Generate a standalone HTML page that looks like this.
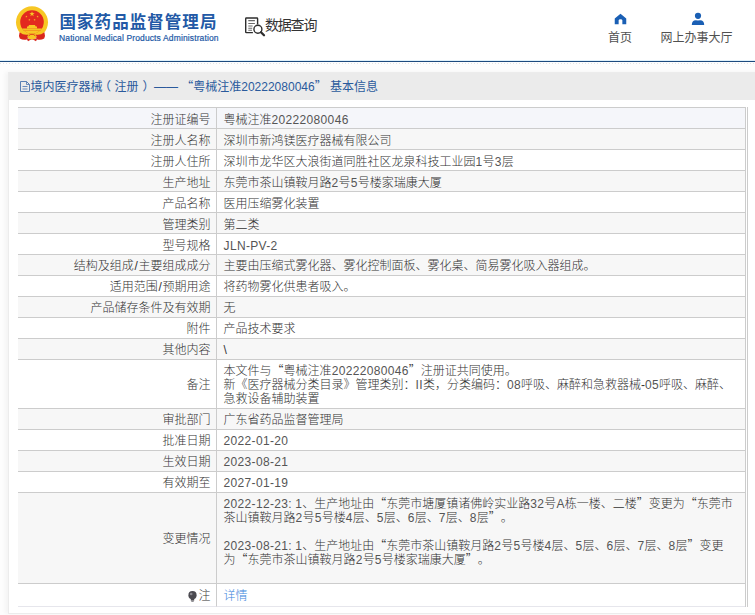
<!DOCTYPE html>
<html lang="zh-CN">
<head>
<meta charset="utf-8">
<title>国家药品监督管理局 数据查询</title>
<style>
html,body{margin:0;padding:0;}
body{width:755px;height:615px;overflow:hidden;background:#fff;font-family:"Liberation Sans","Noto Sans CJK SC",sans-serif;color:#333;position:relative;}
.hdr{position:absolute;left:0;top:0;width:755px;height:61px;background:#fff;border-bottom:1px solid #1c4a7e;box-shadow:0 -1px 0 #dff1fb inset;}
.bgpat{position:absolute;left:0;top:62px;width:755px;height:553px;background:#fdfdfd;}
.dots{position:absolute;left:0;top:63px;width:755px;height:1px;background:repeating-linear-gradient(90deg,#e4e4e4 0 1px,transparent 1px 3px);}
.emb{position:absolute;left:15px;top:5px;width:34px;height:38px;}
.t1{position:absolute;left:59.5px;top:9.5px;font-size:16.5px;line-height:24px;font-weight:bold;color:#2259a6;white-space:nowrap;letter-spacing:1.05px;}
.t2{position:absolute;left:59px;top:32.5px;font-size:8.5px;line-height:11px;color:#2259a6;white-space:nowrap;letter-spacing:0.13px;-webkit-text-stroke:0.2px #2259a6;}
.q{position:absolute;left:265px;top:14.5px;font-size:14px;line-height:20px;color:#333;font-weight:400;white-space:nowrap;letter-spacing:-1.2px;}
.qi{position:absolute;left:244px;top:16px;width:22px;height:22px;}
.nav{position:absolute;top:29px;font-size:12px;line-height:18px;color:#505050;white-space:nowrap;text-align:center;font-weight:400;}
.ni{position:absolute;top:11px;width:14px;height:14px;}
.panel{position:absolute;left:8px;top:72px;width:760px;height:542px;background:#fff;border:1px solid #ececec;box-shadow:-3px 0 4px rgba(0,0,0,0.04);box-sizing:border-box;}
.ph{position:absolute;left:0;top:0;width:760px;height:27px;background:#ebebeb;}
.pt{position:absolute;left:21.5px;top:5px;font-size:12px;line-height:18px;color:#2a5a9c;white-space:nowrap;font-weight:400;}
.pi{position:absolute;left:10.5px;top:8px;width:10px;height:11px;}
table{position:absolute;left:18px;top:107px;width:730px;border-collapse:separate;border-spacing:0;font-size:12px;line-height:14px;border-right:3px double #ccc;font-weight:300;text-spacing-trim:space-all;}
td{border-top:1px solid #ccc;padding:4.6px 5px 1.4px 7px;vertical-align:middle;}
td.l{width:185.6px;text-align:right;border-right:1px solid #ccc;white-space:nowrap;padding-right:5.4px;}
td.v{padding-left:6.6px;}
tr.g td{background:#f7f7f7;}
tr.b td{background:#f5f6fa;}
tr.last td{border-bottom:1px solid #e6e6ec;padding-top:5.6px;padding-bottom:2.4px;}
.bulb{width:9px;height:11px;vertical-align:-2px;margin-right:2px;}
a{color:#3a86dc;text-decoration:none;}
.n{letter-spacing:.33px;color:#555;line-height:0;}
.sl{padding:0 .7px;}
.pl{position:relative;left:-3.5px;}
.pr{position:relative;left:4px;}
.c{font-family:"Noto Sans CJK SC",sans-serif;line-height:0;}
</style>
</head>
<body>
<div class="bgpat"></div>
<div class="dots"></div>
<div class="hdr">
<svg class="emb" viewBox="0 0 34 38">
<circle cx="17" cy="17.3" r="16" fill="#f7c724"/>
<circle cx="17" cy="17" r="11.8" fill="#e3291f"/>
<path d="M7.1 23.4 H26.9 A11.8 11.8 0 0 1 7.1 23.4 Z" fill="#f7c724"/>
<path d="M12 23.6 v-2.2 h1.2 l0.9 -1.5 h5.8 l0.9 1.5 h1.2 v2.2z" fill="#f7c724"/>
<path d="M8.6 25.4 H25.4" stroke="#f0901f" stroke-width="0.9"/>
<path d="M17.00 6.20 L17.66 8.09 L19.66 8.13 L18.07 9.35 L18.65 11.27 L17.00 10.12 L15.35 11.27 L15.93 9.35 L14.34 8.13 L16.34 8.09Z" fill="#f7c724"/>
<path d="M11.40 10.45 L11.67 11.23 L12.49 11.24 L11.84 11.74 L12.08 12.53 L11.40 12.06 L10.72 12.53 L10.96 11.74 L10.31 11.24 L11.13 11.23Z M22.60 10.45 L22.87 11.23 L23.69 11.24 L23.04 11.74 L23.28 12.53 L22.60 12.06 L21.92 12.53 L22.16 11.74 L21.51 11.24 L22.33 11.23Z M14.40 13.65 L14.67 14.43 L15.49 14.44 L14.84 14.94 L15.08 15.73 L14.40 15.26 L13.72 15.73 L13.96 14.94 L13.31 14.44 L14.13 14.43Z M19.60 13.65 L19.87 14.43 L20.69 14.44 L20.04 14.94 L20.28 15.73 L19.60 15.26 L18.92 15.73 L19.16 14.94 L18.51 14.44 L19.33 14.43Z" fill="#f7c724"/>
<path d="M4.6 27.2 Q3.4 31 4.8 33.4 Q8.4 35.6 12.4 34.2 L13.4 29.6 Q8.6 30.6 4.6 27.2Z" fill="#d9271d"/>
<path d="M29.4 27.2 Q30.6 31 29.2 33.4 Q25.6 35.6 21.6 34.2 L20.6 29.6 Q25.4 30.6 29.4 27.2Z" fill="#d9271d"/>
<path d="M12.2 31.2 Q17 25.4 21.8 31.2 L20.6 33 H13.4Z" fill="#f7c724"/>
<path d="M13.6 30.8 Q17 27.6 20.4 30.8" fill="none" stroke="#d9271d" stroke-width="0.9"/>
<path d="M11.6 33.4 L13 36.2 L16 34.4 H18 L21 36.2 L22.4 33.4Z" fill="#d9271d"/>
<path d="M14 33 h6 v1.2 h-6z" fill="#f7c724"/>
</svg>
<div class="t1">国家药品监督管理局</div>
<div class="t2">National Medical Products Administration</div>
<svg class="qi" viewBox="0 0 22 22" fill="none" stroke="#2e2e2e" stroke-width="1.4">
<path d="M8.9 16.6 H2.4 Q1.7 16.6 1.7 15.9 V2.7 Q1.7 2 2.4 2 H12.9 Q13.6 2 13.6 2.7 V8.4"/>
<path d="M4.3 4.6 H10.9 M4.3 7.5 H10.9 M4.3 10 H8.6 M4.3 12.2 H8.2 M4.3 14.3 H8" stroke-width="1.1" stroke="#6a6a6a"/>
<circle cx="13.9" cy="13.2" r="4"/>
<path d="M17 16.3 L20 19.3" stroke-width="2.3" stroke-linecap="round"/>
</svg>
<div class="q">数据查询</div>
<svg class="ni" style="left:613.9px;top:12.5px;width:13px;height:12px" preserveAspectRatio="none" viewBox="0 0 14 14"><path d="M7 0.8 L13.2 6.5 V13 H9 V8.6 Q9 7.4 7 7.4 Q5 7.4 5 8.6 V13 H0.8 V6.5 Z" fill="#1a5fb4"/></svg>
<div class="nav" style="left:608px;width:24px">首页</div>
<svg class="ni" style="left:690.5px;top:11.6px" viewBox="0 0 14 14"><circle cx="7" cy="3.8" r="3.1" fill="#1a5fb4"/><path d="M0.8 13 Q0.8 7.2 7 8.6 Q13.2 7.2 13.2 13 Z" fill="#1a5fb4"/></svg>
<div class="nav" style="left:660px;width:73px">网上办事大厅</div>
</div>
<div class="panel">
<div class="ph"></div>
<svg class="pi" viewBox="0 0 10 11" fill="none" stroke="#4a74ae" stroke-width="0.9"><path d="M0.5 0.5 H6.5 L9.5 3.5 V10.5 H0.5 Z"/><path d="M6.5 0.5 V3.5 H9.5 M2.5 5.5 H7.5 M2.5 8 H7.5" stroke-width="0.8"/></svg>
<div class="pt">境内医疗器械<span class="pl">（</span>注册<span class="pr">）</span> —— <span class="c">“</span>粤械注准20222080046<span class="c">”</span> 基本信息</div>
</div>
<table>
<tr class="b"><td class="l">注册证编号</td><td class="v">粤械注准<span class="n">20222080046</span></td></tr>
<tr class="g"><td class="l">注册人名称</td><td class="v">深圳市新鸿镁医疗器械有限公司</td></tr>
<tr><td class="l">注册人住所</td><td class="v">深圳市龙华区大浪街道同胜社区龙泉科技工业园<span class="n">1</span>号<span class="n">3</span>层</td></tr>
<tr class="g"><td class="l">生产地址</td><td class="v">东莞市茶山镇鞍月路<span class="n">2</span>号<span class="n">5</span>号楼家瑞康大厦</td></tr>
<tr><td class="l">产品名称</td><td class="v">医用压缩雾化装置</td></tr>
<tr class="g"><td class="l">管理类别</td><td class="v">第二类</td></tr>
<tr><td class="l">型号规格</td><td class="v"><span class="n">JLN-PV-2</span></td></tr>
<tr class="g"><td class="l">结构及组成<span class="sl">/</span>主要组成成分</td><td class="v">主要由压缩式雾化器、雾化控制面板、雾化桌、简易雾化吸入器组成。</td></tr>
<tr><td class="l">适用范围<span class="sl">/</span>预期用途</td><td class="v">将药物雾化供患者吸入。</td></tr>
<tr class="g"><td class="l">产品储存条件及有效期</td><td class="v">无</td></tr>
<tr><td class="l">附件</td><td class="v">产品技术要求</td></tr>
<tr class="g"><td class="l">其他内容</td><td class="v">\</td></tr>
<tr><td class="l">备注</td><td class="v">本文件与<span class="c">“</span>粤械注准<span class="n">20222080046</span><span class="c">”</span>注册证共同使用。<br>新《医疗器械分类目录》管理类别：<span class="n">II</span>类，分类编码：<span class="n">08</span>呼吸、麻醉和急救器械-<span class="n">05</span>呼吸、麻醉、<br>急救设备辅助装置</td></tr>
<tr class="g"><td class="l">审批部门</td><td class="v">广东省药品监督管理局</td></tr>
<tr><td class="l">批准日期</td><td class="v"><span class="n">2022-01-20</span></td></tr>
<tr class="g"><td class="l">生效日期</td><td class="v"><span class="n">2023-08-21</span></td></tr>
<tr><td class="l">有效期至</td><td class="v"><span class="n">2027-01-19</span></td></tr>
<tr class="g"><td class="l">变更情况</td><td class="v"><span class="n">2022-12-23:</span> <span class="n">1</span>、生产地址由<span class="c">“</span>东莞市塘厦镇诸佛岭实业路<span class="n">32</span>号<span class="n">A</span>栋一楼、二楼<span class="c">”</span>变更为<span class="c">“</span>东莞市<br>茶山镇鞍月路<span class="n">2</span>号<span class="n">5</span>号楼<span class="n">4</span>层、<span class="n">5</span>层、<span class="n">6</span>层、<span class="n">7</span>层、<span class="n">8</span>层<span class="c">”</span>。<br><br><span class="n">2023-08-21:</span> <span class="n">1</span>、生产地址由<span class="c">“</span>东莞市茶山镇鞍月路<span class="n">2</span>号<span class="n">5</span>号楼<span class="n">4</span>层、<span class="n">5</span>层、<span class="n">6</span>层、<span class="n">7</span>层、<span class="n">8</span>层<span class="c">”</span>变更<br>为<span class="c">“</span>东莞市茶山镇鞍月路<span class="n">2</span>号<span class="n">5</span>号楼家瑞康大厦<span class="c">”</span>。<br><br></td></tr>
<tr class="last"><td class="l"><svg class="bulb" viewBox="0 0 9 11"><circle cx="4.5" cy="4.2" r="4.1" fill="#4b4a50"/><circle cx="3.2" cy="3" r="1.3" fill="#8a8990"/><rect x="2.8" y="8" width="3.4" height="1.6" fill="#4b4a50"/><rect x="3.3" y="9.9" width="2.4" height="0.9" fill="#77767c"/></svg>注</td><td class="v"><a>详情</a></td></tr>
</table>
</body>
</html>
